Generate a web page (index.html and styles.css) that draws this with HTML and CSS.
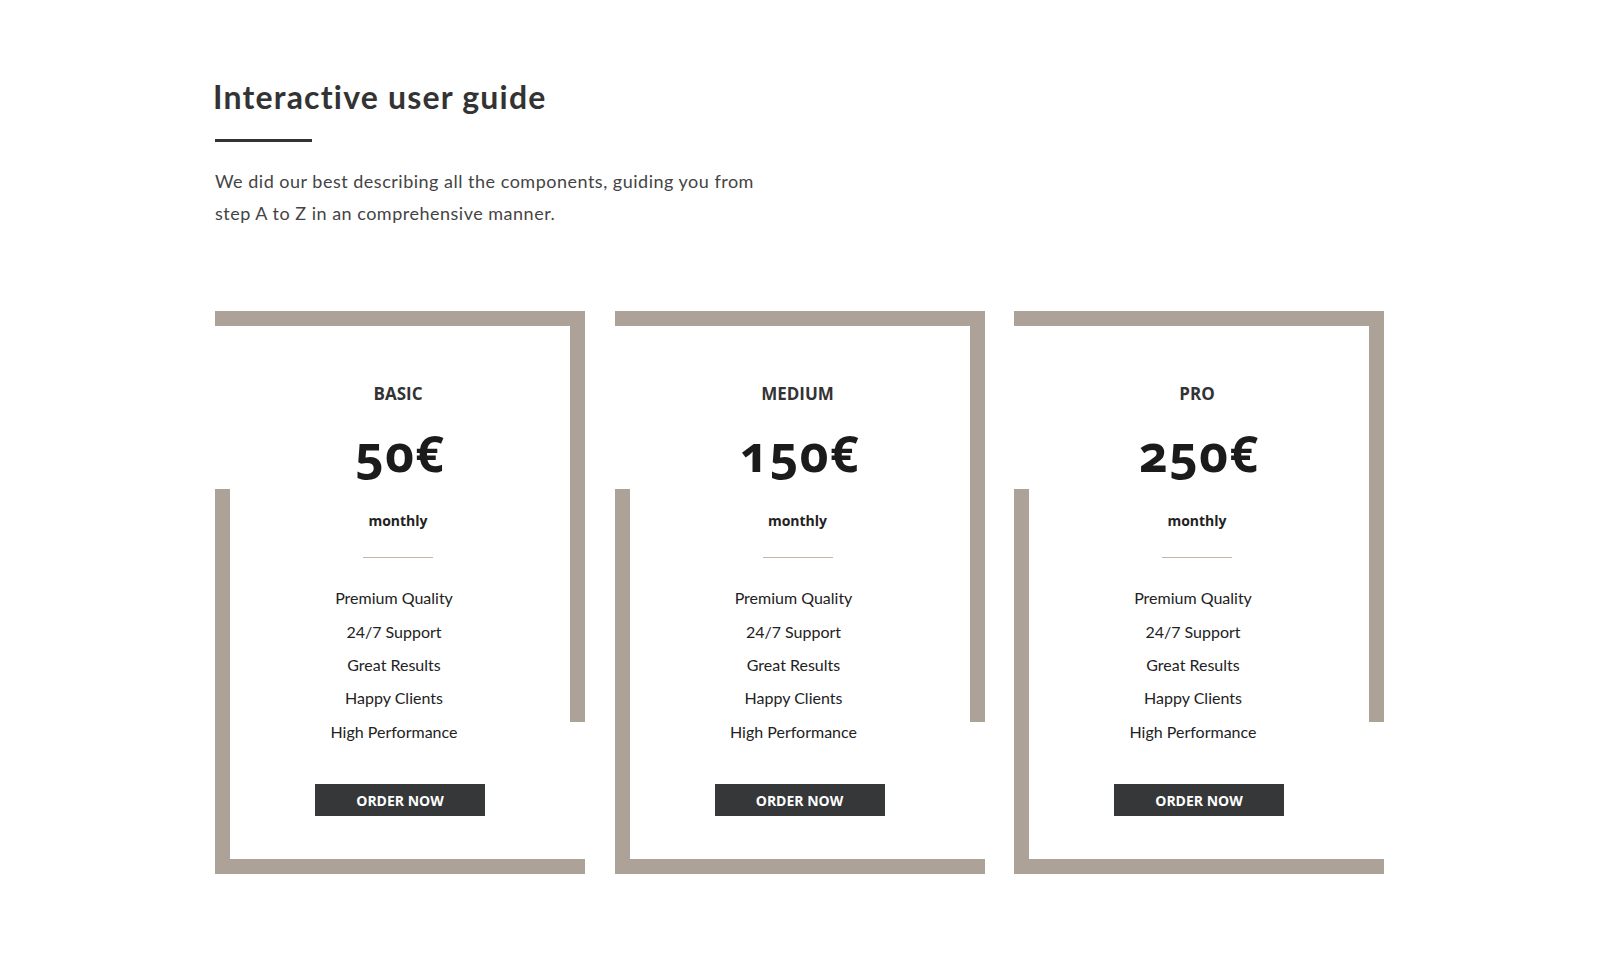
FILE: index.html
```html
<!DOCTYPE html>
<html lang="en">
<head>
<meta charset="utf-8">
<title>Interactive user guide</title>
<link rel="stylesheet" href="styles.css">
</head>
<body>
<main class="page">
  <header class="intro">
    <h1 class="intro-title">Interactive user guide</h1>
    <div class="intro-rule"></div>
    <p class="intro-text">We did our best describing all the components, guiding you from step A to Z in an comprehensive manner.</p>
  </header>
  <section class="plans">
    <article class="plan">
      <h2 class="plan-name">BASIC</h2>
      <div class="plan-price">50€</div>
      <div class="plan-period">monthly</div>
      <div class="plan-rule"></div>
      <ul class="plan-features">
        <li>Premium Quality</li>
        <li>24/7 Support</li>
        <li>Great Results</li>
        <li>Happy Clients</li>
        <li>High Performance</li>
      </ul>
      <a class="plan-button" href="#">ORDER NOW</a>
    </article>
    <article class="plan">
      <h2 class="plan-name">MEDIUM</h2>
      <div class="plan-price">150€</div>
      <div class="plan-period">monthly</div>
      <div class="plan-rule"></div>
      <ul class="plan-features">
        <li>Premium Quality</li>
        <li>24/7 Support</li>
        <li>Great Results</li>
        <li>Happy Clients</li>
        <li>High Performance</li>
      </ul>
      <a class="plan-button" href="#">ORDER NOW</a>
    </article>
    <article class="plan">
      <h2 class="plan-name">PRO</h2>
      <div class="plan-price">250€</div>
      <div class="plan-period">monthly</div>
      <div class="plan-rule"></div>
      <ul class="plan-features">
        <li>Premium Quality</li>
        <li>24/7 Support</li>
        <li>Great Results</li>
        <li>Happy Clients</li>
        <li>High Performance</li>
      </ul>
      <a class="plan-button" href="#">ORDER NOW</a>
    </article>
  </section>
</main>
</body>
</html>
```

FILE: styles.css
```css
*, *::before, *::after { box-sizing: border-box; }

html, body {
  margin: 0;
  padding: 0;
  background: #ffffff;
}

body {
  font-family: "Lato", "Open Sans", sans-serif;
  color: #222;
}

.page {
  width: 1170px;
  margin: 0 auto;
  padding-top: 77px;
}

.intro-title {
  margin: 0;
  font-family: "Lato", sans-serif;
  font-weight: 700;
  font-size: 32px;
  line-height: 40px;
  letter-spacing: 1.2px;
  color: #333333;
  margin-left: -2px;
}

.intro-rule {
  width: 97px;
  height: 3px;
  background: #333333;
  margin-top: 22px;
}

.intro-text {
  margin: 24px 0 0 0;
  width: 565px;
  font-family: "Lato", sans-serif;
  font-size: 18px;
  line-height: 31.6px;
  letter-spacing: 0.5px;
  color: #444444;
}

.plans {
  margin-top: 82px;
  width: 1169px;
  display: flex;
  justify-content: space-between;
}

.plan {
  position: relative;
  width: 370px;
  height: 563px;
  padding-top: 71px;
  display: flex;
  flex-direction: column;
  align-items: center;
  text-align: center;
}

.plan::before,
.plan::after {
  content: "";
  position: absolute;
  pointer-events: none;
  border-color: #ada297;
  border-style: solid;
  border-width: 0;
}

.plan::before {
  top: 0;
  right: 0;
  width: 100%;
  height: 411px;
  border-top-width: 15px;
  border-right-width: 15px;
}

.plan::after {
  bottom: 0;
  left: 0;
  width: 100%;
  height: 385px;
  border-bottom-width: 15px;
  border-left-width: 15px;
}

.plan-name {
  margin: 0;
  font-family: "Open Sans", sans-serif;
  font-weight: 700;
  font-size: 17px;
  line-height: 24px;
  color: #333333;
  margin-left: -4px;
}

.plan-price {
  margin-top: 17px;
  font-family: "Noto Sans", sans-serif;
  font-weight: 700;
  font-size: 50px;
  line-height: 60px;
  color: #1b1b1b;
  font-variant-numeric: oldstyle-nums;
  letter-spacing: 1px;
}

.plan-period {
  margin-top: 28px;
  font-family: "Open Sans", sans-serif;
  font-weight: 700;
  font-size: 14px;
  line-height: 20px;
  color: #222222;
  margin-left: -4px;
}

.plan-rule {
  margin-top: 26px;
  width: 70px;
  height: 1px;
  background: #c4b6a8;
  margin-left: -4px;
}

.plan-features {
  list-style: none;
  margin: 23px 0 0 0;
  padding: 0 12px 0 0;
}

.plan-features li {
  font-family: "Lato", sans-serif;
  font-size: 16px;
  line-height: 33.4px;
  color: #222222;
}

.plan-button {
  margin-top: 36px;
  width: 170px;
  height: 32px;
  display: flex;
  align-items: center;
  justify-content: center;
  background: #363739;
  color: #ffffff;
  text-decoration: none;
  font-family: "Open Sans", sans-serif;
  font-weight: 700;
  font-size: 14px;
}
```
